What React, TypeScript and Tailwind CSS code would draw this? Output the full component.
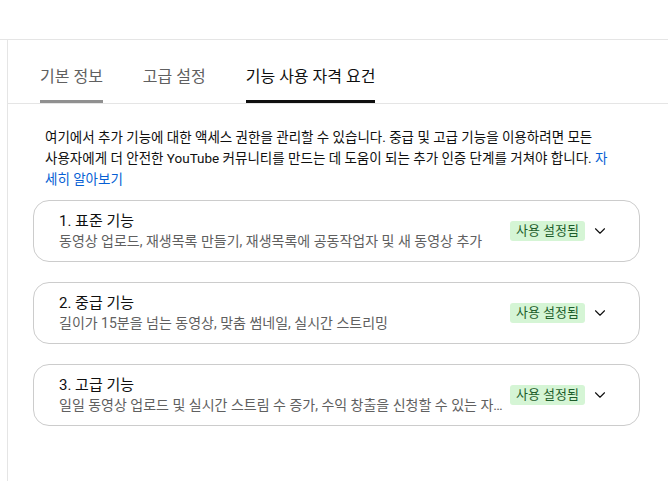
import { ChevronDown } from "lucide-react";

const tabs = [
  { label: "기본 정보", state: "hover" },
  { label: "고급 설정", state: "idle" },
  { label: "기능 사용 자격 요건", state: "active" },
];

const features = [
  {
    title: "1. 표준 기능",
    desc: "동영상 업로드, 재생목록 만들기, 재생목록에 공동작업자 및 새 동영상 추가",
  },
  {
    title: "2. 중급 기능",
    desc: "길이가 15분을 넘는 동영상, 맞춤 썸네일, 실시간 스트리밍",
  },
  {
    title: "3. 고급 기능",
    desc: "일일 동영상 업로드 및 실시간 스트림 수 증가, 수익 창출을 신청할 수 있는 자격, 외부 링크 추가",
  },
];

export default function App() {
  return (
    <div
      className="h-[481px] w-[668px] overflow-hidden bg-white text-[#0f0f0f]"
      style={{ fontFamily: '"Malgun Gothic", Roboto, "Noto Sans CJK KR", sans-serif' }}
    >
      {/* top bar */}
      <div className="h-[40px] border-b border-[#e5e5e5]" />

      <div className="ml-[7px] h-[441px] border-l border-[#e5e5e5]">
        {/* tabs */}
        <div className="flex h-[64px] items-end gap-[40px] border-b border-[#e5e5e5] pl-[32px]">
          {tabs.map((tab) => (
            <div key={tab.label} className="flex flex-col">
              <span
                className={
                  tab.state === "active"
                    ? "text-[16px] leading-[20px] text-[#0f0f0f]"
                    : "text-[16px] leading-[20px] text-[#606060]"
                }
              >
                {tab.label}
              </span>
              <div
                className={
                  tab.state === "active"
                    ? "mt-[13px] h-[3px] bg-[#0f0f0f]"
                    : tab.state === "hover"
                    ? "mt-[13px] h-[3px] bg-[#909090]"
                    : "mt-[13px] h-[3px] bg-transparent"
                }
              />
            </div>
          ))}
        </div>

        {/* description */}
        <div className="pl-[37px] pr-[20px] pt-[23px] text-[13.5px] leading-[21px] text-[#0f0f0f]">
          <span className="block whitespace-nowrap">
            여기에서 추가 기능에 대한 액세스 권한을 관리할 수 있습니다. 중급 및 고급 기능을 이용하려면 모든
          </span>
          <span className="block whitespace-nowrap">
            사용자에게 더 안전한 YouTube 커뮤니티를 만드는 데 도움이 되는 추가 인증 단계를 거쳐야 합니다.{" "}
            <span className="text-[#065fd4]">자</span>
          </span>
          <span className="block text-[#065fd4]">세히 알아보기</span>
        </div>

        {/* feature cards */}
        <div className="mt-[10px] flex flex-col gap-[20px] pl-[25px] pr-[28px]">
          {features.map((f) => (
            <div
              key={f.title}
              className="flex h-[62px] items-center rounded-[16px] border border-[#cccccc] pl-[25px] pr-[30px]"
            >
              <div className="min-w-0 flex-1">
                <div className="text-[15px] leading-[20px] text-[#0f0f0f]">{f.title}</div>
                <div className="truncate text-[14px] leading-[20px] text-[#606060]">{f.desc}</div>
              </div>
              <span className="ml-[6px] rounded-[3px] bg-[#d5f5d5] px-[6px] text-[13px] leading-[20px] text-[#1e5e2b]">
                사용 설정됨
              </span>
              <ChevronDown className="ml-[6px] h-[18px] w-[18px] text-[#0f0f0f]" strokeWidth={1.5} />
            </div>
          ))}
        </div>
      </div>
    </div>
  );
}
